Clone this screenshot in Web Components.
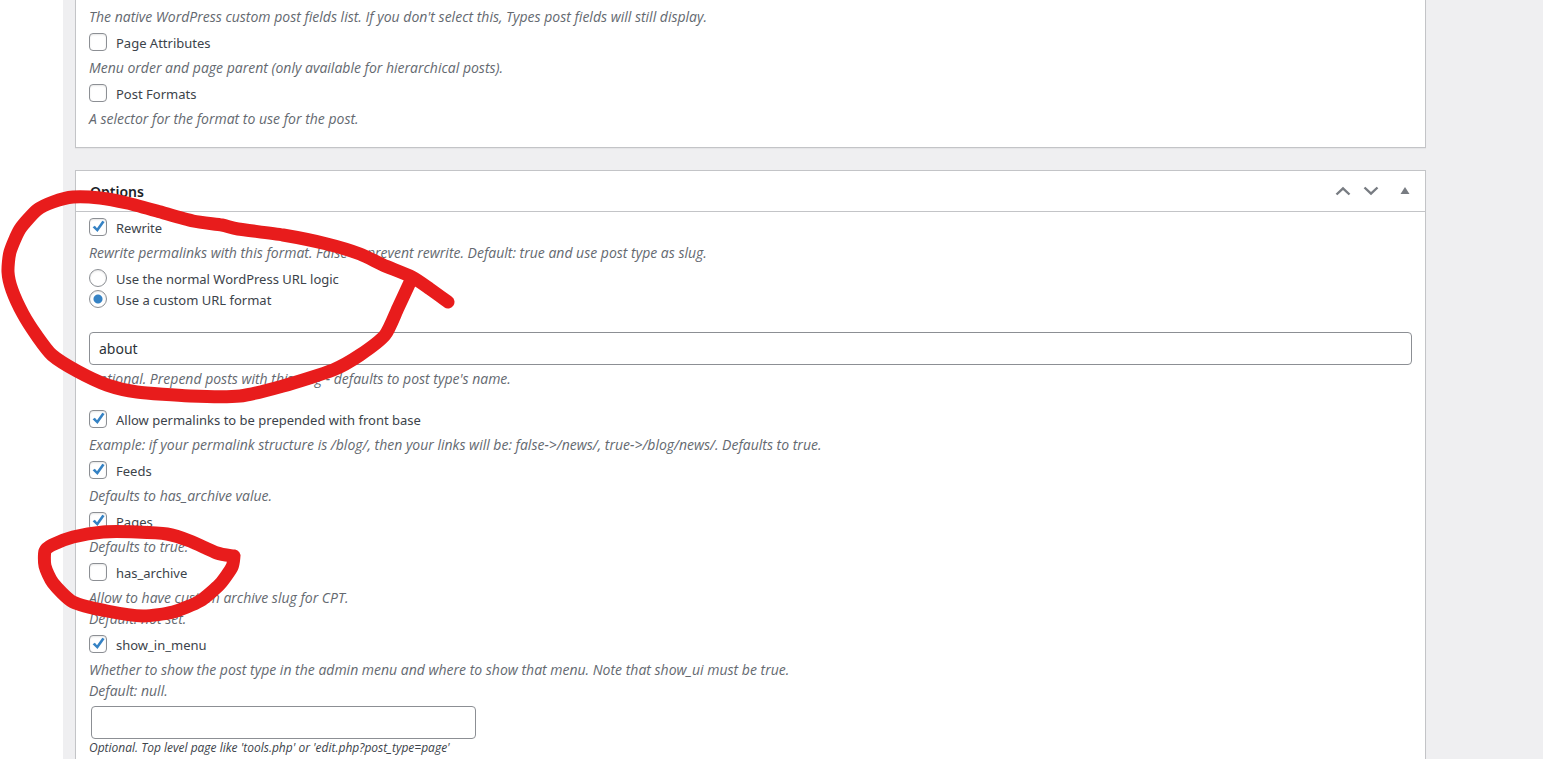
<!DOCTYPE html>
<html lang="en">
<head>
<meta charset="utf-8">
<title>Edit Post Type</title>
<style>
  body { margin: 0; overflow: hidden; background: #efeff1; font-family: "Open Sans", "Noto Sans", sans-serif; font-size: 14px; line-height: 21px; color: #3c434a; }
</style>
</head>
<body>
<admin-page>
  <settings-panel continued>
    <field-note>The native WordPress custom post fields list. If you don't select this, Types post fields will still display.</field-note>
    <check-option>Page Attributes</check-option>
    <field-note>Menu order and page parent (only available for hierarchical posts).</field-note>
    <check-option>Post Formats</check-option>
    <field-note>A selector for the format to use for the post.</field-note>
  </settings-panel>
  <settings-panel heading="Options">
    <check-option checked>Rewrite</check-option>
    <field-note>Rewrite permalinks with this format. False to prevent rewrite. Default: true and use post type as slug.</field-note>
    <url-choice></url-choice>
    <slug-field value="about">Optional. Prepend posts with this slug - defaults to post type's name.</slug-field>
    <check-option checked>Allow permalinks to be prepended with front base</check-option>
    <field-note>Example: if your permalink structure is /blog/, then your links will be: false-&gt;/news/, true-&gt;/blog/news/. Defaults to true.</field-note>
    <check-option checked>Feeds</check-option>
    <field-note>Defaults to has_archive value.</field-note>
    <check-option checked>Pages</check-option>
    <field-note>Defaults to true.</field-note>
    <check-option>has_archive</check-option>
    <field-note>Allow to have custom archive slug for CPT.<br>Default: not set.</field-note>
    <check-option checked>show_in_menu</check-option>
    <field-note>Whether to show the post type in the admin menu and where to show that menu. Note that show_ui must be true.<br>Default: null.</field-note>
    <slug-field compact>Optional. Top level page like 'tools.php' or 'edit.php?post_type=page'</slug-field>
  </settings-panel>
</admin-page>
<ink-marks></ink-marks>

<script>
const define = (name, html, setup) => {
  const template = document.createElement('template');
  template.innerHTML = html;
  customElements.define(name, class extends HTMLElement {
    constructor() {
      super();
      this.attachShadow({ mode: 'open' }).append(template.content.cloneNode(true));
    }
    connectedCallback() { if (setup) setup(this, this.shadowRoot); }
  });
};

/* Boxes and dots shared by tick boxes and radios */
const controlStyle = `
  label { display: flex; align-items: center; gap: 9px; font-family: "Noto Sans", sans-serif; font-size: 13px; }
  input { appearance: none; flex: none; box-sizing: border-box; width: 18px; height: 18px; margin: 0 0 3px; border: 1px solid #8c8f94; background: #fff center / 16px 16px no-repeat; box-shadow: inset 0 1px 2px rgba(0,0,0,.1); }
  input[type=checkbox] { border-radius: 4px; }
  input[type=radio] { border-radius: 50%; }
  input[type=checkbox]:checked { background-image: url("data:image/svg+xml,%3Csvg xmlns='http://www.w3.org/2000/svg' viewBox='0 0 16 16'%3E%3Cpath d='M2.600 8.300 4.900 6.700 7 9.200 12.300 1.800 14.600 3 7.500 13z' fill='%233582c4'/%3E%3C/svg%3E"); }
  input[type=radio]:checked { background-image: radial-gradient(circle, #3582c4 4px, transparent 5px); }
`;

define('admin-page', `
  <style>
    :host { display: grid; grid-template-columns: 63px minmax(0, 1fr); min-height: 100vh; }
    aside { background: #fff; }
    main { display: flex; flex-direction: column; gap: 22px; padding: 0 117px 0 12px; }
  </style>
  <aside></aside>
  <main><slot></slot></main>`);

define('settings-panel', `
  <style>
    :host { display: block; background: #fff; border: 1px solid #c3c4c7; box-shadow: 0 1px 1px rgba(0,0,0,.04); }
    :host([continued]) { border-top: 0; }
    header { display: flex; align-items: center; gap: 8px; height: 40px; padding: 0 10px 0 14px; border-bottom: 1px solid #c3c4c7; }
    :host([continued]) header { display: none; }
    h2 { flex: 1; margin: 0; font-family: "Noto Sans", sans-serif; font-size: 14px; font-weight: 600; color: #1d2327; }
    button { display: grid; place-items: center; width: 20px; height: 20px; padding: 0; border: 0; background: none; color: #787c82; }
    button:last-child { margin-left: 6px; }
    .body { padding: 3px 13px 18px; }
    :host([continued]) .body { padding-top: 6px; }
  </style>
  <header>
    <h2></h2>
    <button aria-label="Move up"><svg width="16" height="10" viewBox="0 0 16 10"><path d="M1.500 8.500 8 2.300l6.500 6.200" fill="none" stroke="currentColor" stroke-width="2.400"/></svg></button>
    <button aria-label="Move down"><svg width="16" height="10" viewBox="0 0 16 10"><path d="M1.500 1.500 8 7.700l6.500-6.200" fill="none" stroke="currentColor" stroke-width="2.400"/></svg></button>
    <button aria-label="Toggle panel"><svg width="10" height="8" viewBox="0 0 10 8"><path d="M5 0 9.500 7h-9z" fill="currentColor"/></svg></button>
  </header>
  <div class="body"><slot></slot></div>`,
  (host, root) => { root.querySelector('h2').textContent = host.getAttribute('heading') || ''; });

define('field-note', `
  <style>:host { display: block; margin-bottom: 3px; font-style: italic; color: #646970; } :host(:last-child) { margin-bottom: 0; }</style>
  <slot></slot>`);

define('check-option', `
  <style>:host { display: block; } ${controlStyle} label { height: 27px; }</style>
  <label><input type="checkbox"><span><slot></slot></span></label>`,
  (host, root) => { root.querySelector('input').checked = host.hasAttribute('checked'); });

define('url-choice', `
  <style>:host { display: block; margin: 6px 0 21px; } ${controlStyle} label { height: 21px; }</style>
  <label><input type="radio" name="url"><span>Use the normal WordPress URL logic</span></label>
  <label><input type="radio" name="url" checked><span>Use a custom URL format</span></label>`);

define('slug-field', `
  <style>
    :host { display: flex; flex-direction: column; gap: 3px; margin-bottom: 18px; font-style: italic; color: #646970; }
    input { box-sizing: border-box; width: 100%; height: 33px; padding: 0 9px; border: 1px solid #8c8f94; border-radius: 4px; background: #fff; font: 14px/31px "Noto Sans", sans-serif; color: #2c3338; }
    :host([compact]) { gap: 0; margin-top: 5px; font-size: 12px; line-height: 18px; color: #3c434a; }
    :host([compact]) input { width: 385px; margin-left: 2px; }
  </style>
  <input id="slug" type="text">
  <label for="slug"><slot></slot></label>`,
  (host, root) => { root.querySelector('input').value = host.getAttribute('value') || ''; });

/* Freehand pen annotations lying over the page */
define('ink-marks', `
  <style>
    :host { position: absolute; top: 0; left: 0; pointer-events: none; }
    svg { display: block; fill: none; stroke: #e81c1c; stroke-width: 13; stroke-linecap: round; stroke-linejoin: round; }
  </style>
  <svg width="470" height="640" aria-hidden="true">
    <path data-points="448,302 430,289 412,277 383,265 360,254 327,244 283,235 238,229 222,225 193,221 157,211 127,203 100,198 73,197 53,202 37,210 20,229 10,252 8,272 12,290 23,314 37,336 52,355 77,371 107,385 137,392 190,396 240,396 283,386 333,370 360,355 385,335 398,308 411,280"/>
    <path data-points="233,556 217,553 190,541 167,534 137,532 103,532 73,537 52,545 45,551 45,566 53,583 73,602 107,611 143,616 173,612 200,601 220,584 232,567 234,556"/>
  </svg>`,
  (host, root) => {
    for (const path of root.querySelectorAll('path')) {
      const p = path.dataset.points.split(' ').map(s => s.split(',').map(Number));
      let d = 'M' + p[0];
      for (let i = 0; i < p.length - 1; i++) {
        const a = p[i - 1] || p[i], b = p[i], c = p[i + 1], e = p[i + 2] || c;
        d += `C${b[0] + (c[0] - a[0]) / 9},${b[1] + (c[1] - a[1]) / 9} ${c[0] - (e[0] - b[0]) / 9},${c[1] - (e[1] - b[1]) / 9} ${c}`;
      }
      path.setAttribute('d', d);
    }
  });
</script>
</body>
</html>
